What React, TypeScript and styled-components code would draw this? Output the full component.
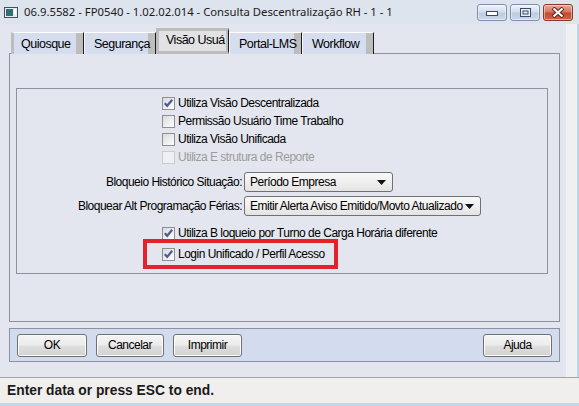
import React from "react";
import styled, { createGlobalStyle } from "styled-components";

const UI = `"Liberation Sans", Arial, sans-serif`;

const Global = createGlobalStyle`
  html, body { margin: 0; padding: 0; }
  body { width: 579px; height: 406px; overflow: hidden; background: #e3e6ee; }
  * { box-sizing: border-box; }
`;

const Window = styled.div`
  width: 579px;
  height: 406px;
  display: flex;
  flex-direction: column;
  background: #e3e6ee;
  font-family: ${UI};
  font-size: 12px;
  letter-spacing: -0.5px;
  color: #000;
`;

const TitleBar = styled.div`
  height: 24px;
  flex: none;
  display: flex;
  align-items: flex-start;
  padding-left: 4px;
  background: #dee4ee;
  letter-spacing: 0;
`;

const TitleIcon = styled.svg`
  margin-top: 7px;
  margin-right: 6px;
  flex: none;
`;

const TitleText = styled.div`
  flex: 1;
  padding-top: 4px;
  font-family: "Noto Sans", "Open Sans", sans-serif;
  font-size: 11.3px;
  line-height: 16px;
  color: #1a1a1a;
  white-space: nowrap;
`;

const WinButtons = styled.div`
  display: flex;
  gap: 3px;
  margin-top: 4px;
  margin-right: 6px;
`;

const WinButton = styled.div<{ $close?: boolean }>`
  width: 30px;
  height: 17px;
  border-radius: 3px;
  display: flex;
  align-items: center;
  justify-content: center;
  border: 1px solid ${(p) => (p.$close ? "#8a3a2c" : "#7d90ad")};
  background: ${(p) =>
    p.$close
      ? "linear-gradient(#eaa898 0%, #d9765f 45%, #c24a33 55%, #d0644a 100%)"
      : "linear-gradient(#eef3fa 0%, #d3deec 45%, #bccbdf 55%, #cbd8e8 100%)"};
  box-shadow: inset 0 0 0 1px rgba(255, 255, 255, 0.45);
`;

const Middle = styled.div`
  flex: 1;
  display: flex;
  min-height: 0;
`;

const Body = styled.div`
  flex: 1;
  display: flex;
  flex-direction: column;
  padding: 5px 6px 0 9px;
`;

const SideStrip = styled.div`
  width: 13px;
  flex: none;
  background: #eff0f1;
  border-right: 2px solid #c2d3e6;
`;

const TabRow = styled.div`
  height: 25px;
  display: flex;
  align-items: flex-end;
  padding-left: 2px;
  position: relative;
  z-index: 1;
  margin-bottom: -1px;
`;

const Tab = styled.div<{ $active?: boolean; $first?: boolean; $w: number }>`
  width: ${(p) => p.$w}px;
  height: ${(p) => (p.$active ? 26 : 22)}px;
  display: flex;
  align-items: center;
  padding-left: ${(p) => (p.$active ? 7 : p.$first ? 7 : 9)}px;
  padding-bottom: ${(p) => (p.$active ? 3 : 0)}px;
  font-size: 12.5px;
  white-space: nowrap;
  overflow: hidden;
  background: ${(p) => (p.$active ? "#e2e2e4" : "#d6ddef")};
  border-top: ${(p) => (p.$active ? "3px solid #bdbdbd" : "1px solid #ffffff")};
  border-left: ${(p) =>
    p.$active ? "3px solid #bdbdbd" : p.$first ? "3px solid #bdbdbd" : "1px solid #f4f6fb"};
  border-right: 1px solid #1c1c1c;
  border-bottom: ${(p) => (p.$active ? "3px solid #bdbdbd" : "none")};
  box-shadow: ${(p) => (p.$active ? "inset -2px 0 0 #bdbdbd" : "inset -7px 0 0 #bdbdbd")};
`;

const Panel = styled.div`
  height: 269px;
  border: 1px solid #8d929e;
  padding: 34px 0 0 6px;
`;

const Group = styled.div`
  position: relative;
  width: 532px;
  height: 186px;
  border: 1px solid #8d929e;
  padding: 5px 0 0 0;
  display: flex;
  flex-direction: column;
`;

const CheckRow = styled.div<{ $mt?: number }>`
  height: 18px;
  display: flex;
  align-items: center;
  gap: 3px;
  margin-left: 145px;
  margin-top: ${(p) => p.$mt ?? 0}px;
`;

const Box = styled.span<{ $disabled?: boolean }>`
  width: 13px;
  height: 13px;
  flex: none;
  display: flex;
  align-items: center;
  justify-content: center;
  border: 1px solid ${(p) => (p.$disabled ? "#c9cbd1" : "#8e8f95")};
  background: ${(p) =>
    p.$disabled
      ? "#eef0f4"
      : "linear-gradient(135deg, #d9d9d9 0%, #eeeeee 55%, #ffffff 100%)"};
`;

const CheckText = styled.span<{ $disabled?: boolean }>`
  color: ${(p) => (p.$disabled ? "#9c9c9c" : "#000")};
  white-space: nowrap;
`;

const FieldRow = styled.div<{ $mt: number }>`
  display: grid;
  grid-template-columns: 225px auto;
  column-gap: 2px;
  align-items: center;
  height: 20px;
  margin-top: ${(p) => p.$mt}px;
`;

const FieldLabel = styled.span`
  text-align: right;
  white-space: nowrap;
`;

const Combo = styled.div<{ $w: number }>`
  width: ${(p) => p.$w}px;
  height: 20px;
  border: 1px solid #707070;
  border-radius: 3px;
  background: linear-gradient(#f8f8f8 0%, #efefef 50%, #e3e3e3 100%);
  display: flex;
  align-items: center;
  justify-content: space-between;
  padding: 0 6px 0 5px;
  white-space: nowrap;
`;

const Highlight = styled.div`
  position: absolute;
  left: 126px;
  top: 150px;
  width: 195px;
  height: 30px;
  border: 4px solid #e5212c;
  pointer-events: none;
`;

const ButtonBar = styled.div`
  margin-top: 6px;
  height: 34px;
  border: 1px solid #8d929e;
  background: #d3dbee;
  display: flex;
  align-items: center;
  gap: 9px;
  padding: 0 7px;
`;

const Button = styled.button<{ $w: number; $right?: boolean }>`
  width: ${(p) => p.$w}px;
  height: 23px;
  margin-left: ${(p) => (p.$right ? "auto" : "0")};
  border: 1px solid #707070;
  border-radius: 3px;
  background: linear-gradient(#f4f4f4 0%, #ececec 48%, #dedede 52%, #d2d2d2 100%);
  box-shadow: inset 0 0 0 1px #fbfbfb;
  font-family: ${UI};
  font-size: 12px;
  letter-spacing: -0.5px;
  color: #000;
  padding: 0;
`;

const StatusBar = styled.div`
  height: 29px;
  flex: none;
  border-top: 1px solid #a3a3a3;
  border-bottom: 3px solid #c4d5e8;
  background: #f0efed;
  display: flex;
  align-items: center;
  padding-left: 7px;
  font-family: "Liberation Sans", Arial, sans-serif;
  font-weight: bold;
  font-size: 13.8px;
  letter-spacing: 0;
  color: #1a1a1a;
`;

const Check = () => (
  <svg width="11" height="11" viewBox="0 0 11 11">
    <path d="M1.8 5.2 L4.2 7.8 L9.2 1.8" fill="none" stroke="#4b5c99" strokeWidth="2.2" />
  </svg>
);

const Arrow = () => (
  <svg width="9" height="5" viewBox="0 0 9 5">
    <path d="M0 0 H9 L4.5 5 Z" fill="#111" />
  </svg>
);

const CheckItem = ({
  label,
  checked,
  disabled,
  mt,
}: {
  label: string;
  checked?: boolean;
  disabled?: boolean;
  mt?: number;
}) => (
  <CheckRow $mt={mt}>
    <Box $disabled={disabled}>{checked && <Check />}</Box>
    <CheckText $disabled={disabled}>{label}</CheckText>
  </CheckRow>
);

const tabs = [
  { label: "Quiosque", w: 73 },
  { label: "Segurança", w: 72 },
  { label: "Visão Usuá", w: 73, active: true },
  { label: "Portal-LMS", w: 73 },
  { label: "Workflow", w: 72 },
];

export default function App() {
  return (
    <>
      <Global />
      <Window>
        <TitleBar>
          <TitleIcon width="14" height="11" viewBox="0 0 14 11">
            <rect x="0.5" y="0.5" width="13" height="10" fill="#e8ecef" stroke="#4a4f55" />
            <rect x="2" y="2" width="7" height="7" fill="#2f6f73" />
            <rect x="10" y="2" width="2" height="5" fill="#ffffff" />
          </TitleIcon>
          <TitleText>06.9.5582 - FP0540 - 1.02.02.014 - Consulta Descentralização RH - 1 - 1</TitleText>
          <WinButtons>
            <WinButton>
              <svg width="12" height="6" viewBox="0 0 12 6">
                <rect x="0.5" y="1.5" width="11" height="4" fill="#fff" stroke="#3b4a66" />
              </svg>
            </WinButton>
            <WinButton>
              <svg width="11" height="9" viewBox="0 0 11 9">
                <rect x="0.5" y="0.5" width="10" height="8" fill="#e8eef6" stroke="#3b4a66" />
                <rect x="3" y="3" width="5" height="3" fill="none" stroke="#3b4a66" />
              </svg>
            </WinButton>
            <WinButton $close>
              <svg width="14" height="11" viewBox="0 0 14 11">
                <path d="M2 1 L12 10 M12 1 L2 10" stroke="#5a1e14" strokeWidth="4" />
                <path d="M2.5 1.5 L11.5 9.5 M11.5 1.5 L2.5 9.5" stroke="#ffffff" strokeWidth="2.2" />
              </svg>
            </WinButton>
          </WinButtons>
        </TitleBar>
        <Middle>
          <Body>
            <TabRow>
              {tabs.map((t, i) => (
                <Tab key={t.label} $w={t.w} $active={t.active} $first={i === 0}>
                  {t.label}
                </Tab>
              ))}
            </TabRow>
            <Panel>
              <Group>
                <CheckItem label="Utiliza Visão Descentralizada" checked />
                <CheckItem label="Permissão Usuário Time Trabalho" />
                <CheckItem label="Utiliza Visão Unificada" />
                <CheckItem label="Utiliza E strutura de Reporte" disabled />
                <FieldRow $mt={6}>
                  <FieldLabel>Bloqueio Histórico Situação:</FieldLabel>
                  <Combo $w={149}>
                    <span>Período Empresa</span>
                    <Arrow />
                  </Combo>
                </FieldRow>
                <FieldRow $mt={4}>
                  <FieldLabel>Bloquear Alt Programação Férias:</FieldLabel>
                  <Combo $w={237}>
                    <span>Emitir Alerta Aviso Emitido/Movto Atualizado</span>
                    <Arrow />
                  </Combo>
                </FieldRow>
                <CheckItem label="Utiliza B loqueio por Turno de Carga Horária diferente" checked mt={8} />
                <CheckItem label="Login Unificado / Perfil Acesso" checked mt={3} />
                <Highlight />
              </Group>
            </Panel>
            <ButtonBar>
              <Button $w={70}>OK</Button>
              <Button $w={68}>Cancelar</Button>
              <Button $w={69}>Imprimir</Button>
              <Button $w={69} $right>
                Ajuda
              </Button>
            </ButtonBar>
          </Body>
          <SideStrip />
        </Middle>
        <StatusBar>Enter data or press ESC to end.</StatusBar>
      </Window>
    </>
  );
}
